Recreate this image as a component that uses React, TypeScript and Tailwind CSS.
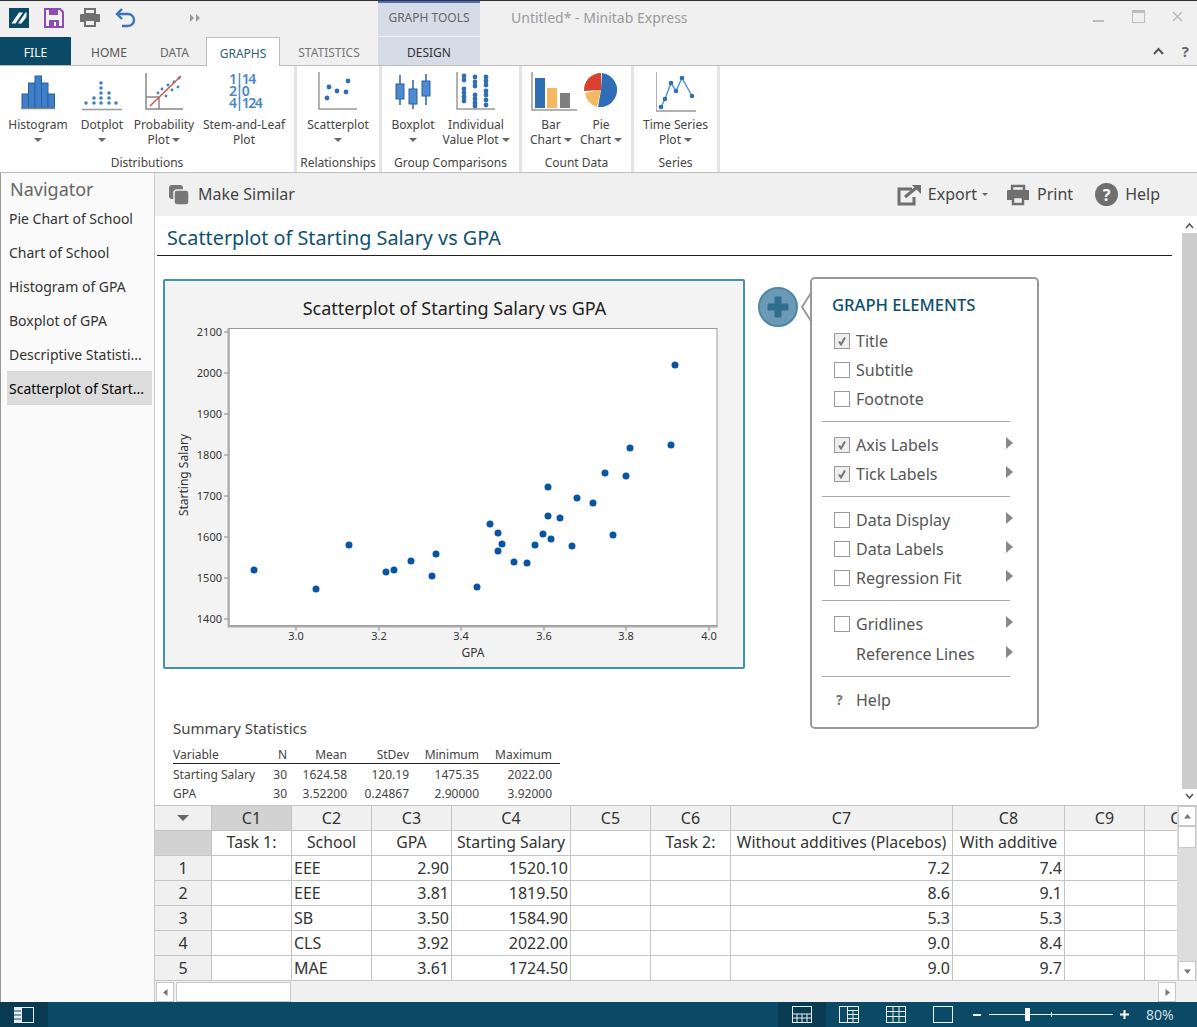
import React from "react";

const points = [
  [254, 570], [316, 589], [349, 545], [386, 572], [394, 570], [411, 561], [432, 576], [436, 554],
  [477, 587], [490, 524], [498, 533], [498, 551], [502, 544], [514, 562], [527, 563], [535, 545],
  [543, 534], [548, 516], [551, 539], [548, 487], [560, 518], [572, 546], [577, 498], [593, 503],
  [605, 473], [613, 535], [626, 476], [630, 448], [671, 445], [675, 365],
];

const Caret = () => (
  <span className="inline-block w-0 h-0 border-x-[4px] border-x-transparent border-t-[4px] border-t-[#666]" />
);

function HistogramIcon() {
  const bars = [[4, 22], [10.5, 11], [17, 4], [23.5, 11], [30, 22]];
  return (
    <svg width="40" height="40" viewBox="0 0 40 40">
      {bars.map(([x, y]) => (
        <rect key={x} x={x} y={y} width="6.5" height={36 - y} fill="#3f7fc9" stroke="#2b5f9e" strokeWidth="1" />
      ))}
      <path d="M3 36.5h34" stroke="#888" strokeWidth="1.5" />
    </svg>
  );
}

function DotplotIcon() {
  const cols = [[4, 1], [12, 2], [19, 5], [27, 3], [34, 1]];
  return (
    <svg width="40" height="40" viewBox="0 0 40 40">
      {cols.flatMap(([x, n]) =>
        Array.from({ length: n }, (_, i) => <circle key={`${x}-${i}`} cx={x} cy={31 - i * 5} r="1.8" fill="#3f7fc9" />)
      )}
      <path d="M0 37.5h40" stroke="#999" strokeWidth="1.5" />
    </svg>
  );
}

function ProbabilityIcon() {
  const dots = [[14, 21], [18, 17], [22, 24], [24, 13], [28, 18], [30, 10], [34, 15], [35, 6]];
  return (
    <svg width="40" height="40" viewBox="0 0 40 40">
      <path d="M2 1v36h37M2 25h13v12" fill="none" stroke="#888" strokeWidth="1.5" />
      {dots.map(([x, y]) => <circle key={x} cx={x} cy={y} r="1.4" fill="#3f7fc9" />)}
      <path d="M6 34 37 4" stroke="#d9534f" strokeWidth="1.5" />
    </svg>
  );
}

function ScatterIcon() {
  const dots = [[9, 26], [11, 15], [19, 19], [28, 20], [30, 9]];
  return (
    <svg width="40" height="40" viewBox="0 0 40 40">
      <path d="M1 0v37h38" fill="none" stroke="#999" strokeWidth="1.5" />
      {dots.map(([x, y]) => <circle key={x} cx={x} cy={y} r="2.4" fill="#2f6db5" />)}
    </svg>
  );
}

function BoxplotIcon() {
  const boxes = [[2, 3, 33, 12, 27], [15, 8, 37, 17, 32], [28, 2, 33, 9, 24]];
  return (
    <svg width="38" height="40" viewBox="0 0 38 40">
      {boxes.map(([x, w1, w2, b1, b2]) => (
        <g key={x}>
          <path d={`M${x + 4} ${w1}V${w2}`} stroke="#2b5f9e" strokeWidth="1.5" />
          <rect x={x} y={b1} width="8" height={b2 - b1} fill="#4d8ad0" stroke="#2b5f9e" />
        </g>
      ))}
    </svg>
  );
}

function IndividualIcon() {
  const dots = [
    [8, 4], [8, 8], [8, 17], [8, 21], [8, 25], [8, 29],
    [19, 5], [19, 10], [19, 14], [19, 23], [19, 27], [19, 31], [19, 34],
    [30, 5], [30, 9], [30, 13], [30, 19], [30, 23], [30, 28], [30, 33],
  ];
  return (
    <svg width="40" height="40" viewBox="0 0 40 40">
      <path d="M1 0v37h38" fill="none" stroke="#999" strokeWidth="1.5" />
      {dots.map(([x, y]) => <circle key={`${x}-${y}`} cx={x} cy={y} r="2.4" fill="#2f6db5" />)}
    </svg>
  );
}

function BarIcon() {
  return (
    <svg width="46" height="40" viewBox="0 0 46 40" className="ml-[6px] shrink-0">
      <path d="M1 0v38h45" fill="none" stroke="#999" strokeWidth="1.5" />
      <rect x="4" y="6" width="10" height="30" fill="#2f6db5" />
      <rect x="16" y="16" width="10" height="20" fill="#f4b860" />
      <rect x="29" y="21" width="10" height="15" fill="#7f7f7f" />
    </svg>
  );
}

function PieIcon() {
  return (
    <svg width="36" height="36" viewBox="0 0 36 36" className="shrink-0">
      <path d="M19 1A17 17 0 1 1 15 35L18 18Z" fill="#2f6db5" />
      <path d="M14 35A17 17 0 0 1 2 21L18 18Z" fill="#f4b860" />
      <path d="M1 19A17 17 0 0 1 18 1V18Z" fill="#d9412f" />
    </svg>
  );
}

function TimeIcon() {
  const pts = [[5, 35], [9, 27], [15, 11], [20, 19], [26, 6], [36, 24]];
  return (
    <svg width="40" height="40" viewBox="0 0 40 40">
      <path d="M0 0v39h40" fill="none" stroke="#999" strokeWidth="1.5" />
      <polyline points={pts.map((p) => p.join(",")).join(" ")} fill="none" stroke="#5b93cf" strokeWidth="1.5" />
      {pts.map(([x, y]) => <circle key={x} cx={x} cy={y} r="2.3" fill="#2f6db5" />)}
    </svg>
  );
}

function StemIcon() {
  return (
    <div className="w-[40px] h-[40px] pl-[5px] pt-[1px] text-[14px] leading-[12px] tracking-[-1.5px] font-semibold text-[#4a86c8] whitespace-pre">
      <div>1|14</div>
      <div>2|0</div>
      <div>4|124</div>
    </div>
  );
}

function RibbonButton({ width, lines, caret, icon }: { width: string; lines: string[]; caret?: boolean; icon: React.ReactNode }) {
  return (
    <div className={`flex flex-col items-center ${width}`}>
      <div className="h-[51px] pt-[6px] flex items-start justify-center">{icon}</div>
      {lines.map((line, i) => (
        <div key={line} className="h-[15px] leading-[15px] whitespace-nowrap flex items-center gap-[3px]">
          {line}
          {caret && i === 1 && <Caret />}
        </div>
      ))}
      {caret && lines.length === 1 && (
        <div className="h-[15px] flex items-center"><Caret /></div>
      )}
    </div>
  );
}

function RibbonGroup({ label, width, children }: { label: string; width: string; children: React.ReactNode }) {
  return (
    <div className={`${width} h-full flex flex-col border-r-[3px] border-r-[#e4e4e4]`}>
      <div className="flex justify-center flex-1">{children}</div>
      <div className="h-[19px] text-center leading-[19px] text-[12px] whitespace-nowrap">{label}</div>
    </div>
  );
}

function Ribbon() {
  return (
    <div className="h-[107px] bg-white border-b border-[#bdbdbd] flex text-[12px] text-[#444]">
      <RibbonGroup label="Distributions" width="w-[297px]">
        <RibbonButton width="w-[70px]" lines={["Histogram"]} caret icon={<HistogramIcon />} />
        <RibbonButton width="w-[58px]" lines={["Dotplot"]} caret icon={<DotplotIcon />} />
        <RibbonButton width="w-[66px]" lines={["Probability", "Plot"]} caret icon={<ProbabilityIcon />} />
        <RibbonButton width="w-[94px]" lines={["Stem-and-Leaf", "Plot"]} icon={<StemIcon />} />
      </RibbonGroup>
      <RibbonGroup label="Relationships" width="w-[85px]">
        <RibbonButton width="w-[80px]" lines={["Scatterplot"]} caret icon={<ScatterIcon />} />
      </RibbonGroup>
      <RibbonGroup label="Group Comparisons" width="w-[140px]">
        <RibbonButton width="w-[51px]" lines={["Boxplot"]} caret icon={<BoxplotIcon />} />
        <RibbonButton width="w-[75px]" lines={["Individual", "Value Plot"]} caret icon={<IndividualIcon />} />
      </RibbonGroup>
      <RibbonGroup label="Count Data" width="w-[112px]">
        <RibbonButton width="w-[49px]" lines={["Bar", "Chart"]} caret icon={<BarIcon />} />
        <RibbonButton width="w-[51px]" lines={["Pie", "Chart"]} caret icon={<PieIcon />} />
      </RibbonGroup>
      <RibbonGroup label="Series" width="w-[86px]">
        <RibbonButton width="w-[80px]" lines={["Time Series", "Plot"]} caret icon={<TimeIcon />} />
      </RibbonGroup>
    </div>
  );
}

function TitleBar() {
  return (
    <div className="h-[36px] flex">
      <div className="w-[378px] flex items-center pl-[9px]">
        <svg width="20" height="20" viewBox="0 0 20 20" className="mt-[-2px]">
          <rect width="20" height="20" fill="#0b4a66" />
          <path d="M2.5 15.5 10 4.5h4L6.5 15.5zM9 15.5 16.5 4.5h1v4.5L12.5 15.5z" fill="#fff" />
        </svg>
        <svg width="20" height="20" viewBox="0 0 20 20" className="ml-[15px] mt-[-2px]">
          <path d="M1 1h15l3 3v15H1z" fill="none" stroke="#8e4bb5" strokeWidth="2" />
          <path d="M5 1h9v6H5zM5 12h10v7H5z" fill="#8e4bb5" />
          <rect x="10" y="14" width="2" height="4" fill="#fff" />
        </svg>
        <svg width="22" height="20" viewBox="0 0 22 20" className="ml-[15px] mt-[-2px]">
          <path d="M6 1h10v5H6z" fill="none" stroke="#707070" strokeWidth="2" />
          <path d="M2 6h18a1 1 0 0 1 1 1v7h-4v-3H5v3H1V7a1 1 0 0 1 1-1z" fill="#707070" />
          <path d="M6 12h10v6H6z" fill="none" stroke="#707070" strokeWidth="2" />
        </svg>
        <svg width="22" height="20" viewBox="0 0 22 20" className="ml-[14px] mt-[-2px]">
          <path d="M7 1 2 6l5 5" fill="none" stroke="#3a73b8" strokeWidth="2.4" />
          <path d="M3 6h10a6 6 0 0 1 0 12H7" fill="none" stroke="#3a73b8" strokeWidth="2.4" />
        </svg>
        <svg width="11" height="8" viewBox="0 0 11 8" className="ml-[53px] mt-[-2px]">
          <path d="M0 0l4 4-4 4zM6 0l4 4-4 4z" fill="#999" />
        </svg>
      </div>
      <div className="w-[102px] bg-[#d6dbe8] border-t-[2px] border-t-[#4c6fb8] border-b border-b-[#eef0f5] flex items-center justify-center pb-[3px] text-[12px] text-[#666]">
        GRAPH TOOLS
      </div>
      <div className="ml-[31px] flex-1 flex items-center text-[14px] text-[#9a9a9a] mt-[-4px]">Untitled* - Minitab Express</div>
      <div className="flex items-start pt-[9px] pr-[10px]">
        <div className="w-[11px] h-[2px] bg-[#bdbdbd] mt-[10px] mr-[28px]" />
        <div className="w-[13px] h-[13px] border border-[#bdbdbd] border-t-[3px] mr-[27px]" />
        <svg width="11" height="11" viewBox="0 0 11 11" className="mt-[1px] mr-[4px]">
          <path d="M1 1l9 9M10 1l-9 9" stroke="#bdbdbd" strokeWidth="1.6" />
        </svg>
      </div>
    </div>
  );
}

function TabRow() {
  return (
    <div className="h-[29px] flex text-[12px] border-b border-[#bdbdbd] text-[#555]">
      <div className="w-[71px] bg-[#0b4a66] text-white flex items-center justify-center pt-[3px]">FILE</div>
      <div className="w-[76px] flex items-center justify-center pt-[3px]">HOME</div>
      <div className="w-[55px] flex items-center justify-center pt-[3px] text-[#666]">DATA</div>
      <div className="ml-[4px] w-[74px] h-[29px] bg-white border border-b-0 border-[#bdbdbd] flex items-center justify-center pt-[3px] text-[#2f5f7a]">GRAPHS</div>
      <div className="w-[98px] flex items-center justify-center pt-[3px] text-[#777]">STATISTICS</div>
      <div className="w-[102px] bg-[#d6dbe8] flex items-center justify-center pt-[3px] text-[#333]">DESIGN</div>
      <div className="flex-1 flex items-center justify-end gap-[18px] pr-[8px]">
        <svg width="11" height="8" viewBox="0 0 11 8"><path d="M1 7l4.5-5L10 7" fill="none" stroke="#555" strokeWidth="2" /></svg>
        <span className="text-[15px] font-bold text-[#666]">?</span>
      </div>
    </div>
  );
}

function Navigator() {
  const items = ["Pie Chart of School", "Chart of School", "Histogram of GPA", "Boxplot of GPA", "Descriptive Statisti...", "Scatterplot of Start..."];
  return (
    <div className="w-[155px] shrink-0 bg-[#fafafa] border-r border-[#c8c8c8] border-l border-l-[#999]">
      <div className="h-[28px] pl-[9px] pt-[4px] text-[18px] leading-[24px] text-[#666]">Navigator</div>
      {items.map((item, i) => (
        <div
          key={item}
          className={`ml-[6px] w-[145px] h-[34px] pl-[2px] flex items-center text-[14px] whitespace-nowrap text-[#333] ${i === 5 ? "bg-[#dcdcdc] text-black" : ""}`}
        >
          {item}
        </div>
      ))}
    </div>
  );
}

function ToolbarBar() {
  return (
    <div className="h-[43px] flex items-center justify-between bg-[#f0f0f0] text-[16px] leading-[22px] text-[#444]">
      <div className="flex items-center pl-[13px] gap-[8px]">
        <svg width="22" height="22" viewBox="0 0 22 22">
          <rect x="1" y="1" width="14" height="14" rx="3" fill="#777" />
          <rect x="6" y="6" width="15" height="15" rx="3" fill="#777" stroke="#f0f0f0" strokeWidth="1.5" />
        </svg>
        <span className="mt-[-2px]">Make Similar</span>
      </div>
      <div className="flex items-center pr-[37px]">
        <svg width="24" height="22" viewBox="0 0 24 22">
          <path d="M15 5H2v15h15v-7" fill="none" stroke="#6f6f6f" strokeWidth="3" />
          <path d="M8 13 19 4" stroke="#6f6f6f" strokeWidth="3" />
          <path d="M15 1h9v9z" fill="#6f6f6f" />
        </svg>
        <span className="ml-[7px] mt-[-2px]">Export</span>
        <span className="ml-[5px] inline-block w-0 h-0 border-x-[3px] border-x-transparent border-t-[3px] border-t-[#666]" />
        <svg width="24" height="22" viewBox="0 0 24 22" className="ml-[18px]">
          <path d="M6 2h12v5H6z" fill="none" stroke="#6f6f6f" strokeWidth="2.5" />
          <path d="M2 6h20a1 1 0 0 1 1 1v9h-5v-4H6v4H1V7a1 1 0 0 1 1-1z" fill="#6f6f6f" />
          <path d="M7 13h10v7h-10z" fill="none" stroke="#6f6f6f" strokeWidth="2.5" />
        </svg>
        <span className="ml-[7px] mt-[-2px]">Print</span>
        <div className="ml-[22px] w-[23px] h-[23px] rounded-full bg-[#6f6f6f] text-white text-[16px] font-bold flex items-center justify-center">?</div>
        <span className="ml-[7px] mt-[-2px]">Help</span>
      </div>
    </div>
  );
}

function ScatterChart() {
  const yTicks = [[2100, 332], [2000, 373], [1900, 414], [1800, 455], [1700, 496], [1600, 537], [1500, 578], [1400, 619]];
  const xTicks = [["3.0", 296], ["3.2", 379], ["3.4", 461], ["3.6", 544], ["3.8", 626], ["4.0", 709]];
  return (
    <svg width="578" height="385" viewBox="165 281 578 385" className="block">
      <text x="454.5" y="315" textAnchor="middle" fontSize="18" fill="#222">Scatterplot of Starting Salary vs GPA</text>
      <rect x="229" y="328.5" width="488" height="297" fill="#fff" stroke="#999" />
      <path d="M228.5 328v299M228 626.5h490" stroke="#aaa" strokeWidth="2" />
      {yTicks.map(([label, y]) => (
        <g key={label}>
          <path d={`M224 ${y}h4`} stroke="#888" />
          <text x="222" y={Number(y) + 4} textAnchor="end" fontSize="11" fill="#333">{label}</text>
        </g>
      ))}
      {xTicks.map(([label, x]) => (
        <g key={label}>
          <path d={`M${x} 627v4`} stroke="#888" />
          <text x={x} y="640" textAnchor="middle" fontSize="11" fill="#333">{label}</text>
        </g>
      ))}
      <text x="473" y="657" textAnchor="middle" fontSize="12" fill="#333">GPA</text>
      <text transform="translate(188 475) rotate(-90)" textAnchor="middle" fontSize="12" fill="#333">Starting Salary</text>
      {points.map(([x, y]) => <circle key={`${x}-${y}`} cx={x} cy={y} r="3.5" fill="#0a55a3" />)}
    </svg>
  );
}

function Check({ checked }: { checked?: boolean }) {
  return (
    <div className={`w-[16px] h-[16px] border border-[#9a9a9a] flex items-center justify-center shrink-0 ${checked ? "bg-[#eeeeee]" : "bg-white"}`}>
      {checked && (
        <svg width="10" height="10" viewBox="0 0 10 10"><path d="M2 5.5 4 8.5 8 1.5" fill="none" stroke="#777" strokeWidth="2" /></svg>
      )}
    </div>
  );
}

function PanelRow({ label, checked, box = true, arrow }: { label: string; checked?: boolean; box?: boolean; arrow?: boolean }) {
  return (
    <div className="h-[29px] flex items-center text-[16px] text-[#555] pl-[22px]">
      {box ? <Check checked={checked} /> : <div className="w-[16px]" />}
      <span className="ml-[6px] flex-1">{label}</span>
      {arrow && <span className="mr-[24px] mt-[-4px] w-0 h-0 border-y-[6px] border-y-transparent border-l-[7px] border-l-[#888]" />}
    </div>
  );
}

const PanelSep = () => <div className="mx-[10px] w-[188px] h-px bg-[#a8a8a8] my-[8px]" />;

function GraphElements() {
  return (
    <div className="absolute left-[603px] top-[61px]">
      <div className="absolute left-[0px] top-[10px] w-[40px] h-[40px] rounded-full bg-[#6a9ab5] border-2 border-[#4f86a3] flex items-center justify-center">
        <svg width="22" height="22" viewBox="0 0 22 22"><path d="M8 1h6v7h7v6h-7v7H8v-7H1V8h7z" fill="#2f6e8f" stroke="#2f6e8f" strokeLinejoin="round" /></svg>
      </div>
      <div className="absolute left-[43px] top-[16px] w-[11px] h-[28px]">
        <svg width="11" height="28" viewBox="0 0 11 28"><path d="M10 0 1 14l9 14" fill="#fff" stroke="#999" strokeWidth="2" /></svg>
      </div>
      <div className="absolute left-[52px] top-0 w-[229px] h-[452px] bg-white border-2 border-[#999] rounded-[5px] pt-[15px]">
        <div className="pl-[20px] h-[32px] text-[16.6px] leading-[22px] font-medium text-[#0d4f6c]">GRAPH ELEMENTS</div>
        <PanelRow label="Title" checked />
        <PanelRow label="Subtitle" />
        <PanelRow label="Footnote" />
        <PanelSep />
        <PanelRow label="Axis Labels" checked arrow />
        <PanelRow label="Tick Labels" checked arrow />
        <PanelSep />
        <PanelRow label="Data Display" arrow />
        <PanelRow label="Data Labels" arrow />
        <PanelRow label="Regression Fit" arrow />
        <PanelSep />
        <PanelRow label="Gridlines" arrow />
        <div className="h-[1px]" />
        <PanelRow label="Reference Lines" box={false} arrow />
        <PanelSep />
        <div className="h-[29px] mt-[3px] flex items-center text-[16px] text-[#555] pl-[24px]">
          <span className="w-[14px] font-bold text-[14px] text-[#777]">?</span>
          <span className="ml-[6px]">Help</span>
        </div>
      </div>
    </div>
  );
}

function SummaryStats() {
  const head = ["Variable", "N", "Mean", "StDev", "Minimum", "Maximum"];
  const rows = [
    ["Starting Salary", "30", "1624.58", "120.19", "1475.35", "2022.00"],
    ["GPA", "30", "3.52200", "0.24867", "2.90000", "3.92000"],
  ];
  const cols = "grid grid-cols-[93px_21px_60px_62px_70px_73px_8px]";
  return (
    <div className="ml-[18px] mt-[49px] w-[387px] text-[12px] text-[#444]">
      <div className="text-[15px] leading-[20px] text-[#444] mb-[7px]">Summary Statistics</div>
      <div className={`${cols} h-[19px] border-b border-[#222] leading-[20px]`}>
        {head.map((h, i) => <div key={h} className={`${i ? "text-right" : ""} whitespace-nowrap`}>{h}</div>)}
        <div />
      </div>
      {rows.map((r) => (
        <div key={r[0]} className={`${cols} h-[19px] leading-[21px]`}>
          {r.map((c, i) => <div key={i} className={`${i ? "text-right" : ""} whitespace-nowrap`}>{c}</div>)}
          <div />
        </div>
      ))}
    </div>
  );
}

function OutputPane() {
  return (
    <div className="h-[589px] flex bg-white">
      <div className="flex-1 relative overflow-hidden">
        <div className="ml-[2px] mr-[10px] h-[40px] border-b border-[#222] pl-[10px] text-[19.8px] leading-[43px] text-[#0d5170]">
          Scatterplot of Starting Salary vs GPA
        </div>
        <div className="ml-[8px] mt-[23px] w-[582px] h-[390px] border-2 border-[#3f93ad] rounded-[2px] bg-[#f3f3f3]">
          <ScatterChart />
        </div>
        <SummaryStats />
        <GraphElements />
      </div>
      <div className="w-[15px] flex flex-col items-center bg-white">
        <svg width="9" height="17" viewBox="0 0 9 17" className="shrink-0"><path d="M1 12l3.5-4L8 12" fill="none" stroke="#555" strokeWidth="1.5" /></svg>
        <div className="w-full h-[556px] bg-[#cdcdcd]" />
        <svg width="9" height="12" viewBox="0 0 9 12" className="mt-[2px] shrink-0"><path d="M1 3l3.5 4L8 3" fill="none" stroke="#555" strokeWidth="1.5" /></svg>
      </div>
    </div>
  );
}

const colHeaders = ["C1", "C2", "C3", "C4", "C5", "C6", "C7", "C8", "C9", "C10"];
const colNames = ["Task 1:", "School", "GPA", "Starting Salary", "", "Task 2:", "Without additives (Placebos)", "With additive", "", ""];
const sheetRows = [
  ["EEE", "2.90", "1520.10", "7.2", "7.4"],
  ["EEE", "3.81", "1819.50", "8.6", "9.1"],
  ["SB", "3.50", "1584.90", "5.3", "5.3"],
  ["CLS", "3.92", "2022.00", "9.0", "8.4"],
  ["MAE", "3.61", "1724.50", "9.0", "9.7"],
];

function Sheet() {
  const cell = "h-[25px] pb-[1px] border-r border-b border-[#c4c4c4] flex items-center text-[16px] text-[#333] whitespace-nowrap overflow-hidden";
  return (
    <div className="flex-1 overflow-hidden">
      <div className="w-[1070px] grid grid-cols-[57px_80px_80px_80px_119px_80px_80px_222px_112px_80px_80px]">
        <div className={`${cell} bg-[#f0f0f0] justify-center`}>
          <span className="w-0 h-0 border-x-[6px] border-x-transparent border-t-[6px] border-t-[#666]" />
        </div>
        {colHeaders.map((c, i) => (
          <div key={c} className={`${cell} justify-center ${i === 0 ? "bg-[#d2d2d2]" : "bg-[#f0f0f0]"}`}>{c}</div>
        ))}
        <div className={`${cell} bg-[#d2d2d2]`} />
        {colNames.map((c, i) => <div key={i} className={`${cell} bg-white justify-center !text-[15.8px]`}>{c}</div>)}
        {sheetRows.map(([school, gpa, salary, a, b], r) => (
          <React.Fragment key={r}>
            <div className={`${cell} bg-[#f0f0f0] justify-center`}>{r + 1}</div>
            <div className={`${cell} bg-white`} />
            <div className={`${cell} bg-white pl-[2px]`}>{school}</div>
            <div className={`${cell} bg-white justify-end pr-[2px]`}>{gpa}</div>
            <div className={`${cell} bg-white justify-end pr-[2px]`}>{salary}</div>
            <div className={`${cell} bg-white`} />
            <div className={`${cell} bg-white`} />
            <div className={`${cell} bg-white justify-end pr-[2px]`}>{a}</div>
            <div className={`${cell} bg-white justify-end pr-[2px]`}>{b}</div>
            <div className={`${cell} bg-white`} />
            <div className={`${cell} bg-white`} />
          </React.Fragment>
        ))}
      </div>
    </div>
  );
}

function ScrollButton({ d }: { d: string }) {
  return (
    <div className="w-[18px] h-[20px] bg-white border border-[#c8c8c8] flex items-center justify-center shrink-0">
      <svg width="9" height="9" viewBox="0 0 9 9"><path d={d} fill="#777" /></svg>
    </div>
  );
}

function SheetPane() {
  return (
    <div className="flex flex-col border-t border-[#c4c4c4]">
      <div className="h-[175px] flex overflow-hidden">
        <Sheet />
        <div className="w-[20px] shrink-0 bg-[#dcdcdc] flex flex-col items-center">
          <ScrollButton d="M1 6.5 4.5 2 8 6.5z" />
          <div className="w-[18px] h-[22px] bg-white border border-[#c8c8c8]" />
          <div className="flex-1" />
          <ScrollButton d="M1 2.5 4.5 7 8 2.5z" />
        </div>
      </div>
      <div className="h-[21px] bg-[#f0f0f0] flex items-start pl-[1px] pt-[1px]">
        <ScrollButton d="M6.5 1 2 4.5 6.5 8z" />
        <div className="ml-[2px] w-[115px] h-[20px] bg-white border border-[#c8c8c8]" />
        <div className="flex-1" />
        <div className="mr-[21px]"><ScrollButton d="M2.5 1 7 4.5 2.5 8z" /></div>
      </div>
    </div>
  );
}

function StatusBar() {
  return (
    <div className="h-[25px] bg-[#0b4a66] flex items-stretch text-[#dfe9ee]">
      <div className="w-[48px] bg-[#083b52] flex items-center justify-center">
        <svg width="20" height="16" viewBox="0 0 20 16">
          <rect x="0.5" y="0.5" width="19" height="15" fill="none" stroke="#e8eef1" />
          <path d="M0 0h8v16H0z" fill="#e8eef1" />
          <path d="M0 4h7M0 8h7M0 12h7" stroke="#0b4a66" />
        </svg>
      </div>
      <div className="flex-1" />
      <div className="w-[48px] bg-[#083b52] flex items-center justify-center">
        <svg width="20" height="17" viewBox="0 0 20 17">
          <rect x="0.5" y="0.5" width="19" height="16" fill="none" stroke="#e8eef1" />
          <path d="M0 8h20M0 12h20M5 8v9M10 8v9M15 8v9" stroke="#e8eef1" />
        </svg>
      </div>
      <div className="flex items-center pl-[13px] pr-[20px] gap-[27px]">
        <svg width="20" height="17" viewBox="0 0 20 17">
          <rect x="0.5" y="0.5" width="19" height="16" fill="none" stroke="#e8eef1" />
          <path d="M8.5 0v17M8 4.5h12M8 8.5h12M8 12.5h12M14 4v13" stroke="#e8eef1" />
        </svg>
        <svg width="20" height="17" viewBox="0 0 20 17">
          <rect x="0.5" y="0.5" width="19" height="16" fill="none" stroke="#e8eef1" />
          <path d="M0 5.5h20M0 10.5h20M7 0v17M13 0v17" stroke="#e8eef1" />
        </svg>
        <div className="w-[20px] h-[17px] border border-[#e8eef1]" />
      </div>
      <div className="flex items-center w-[173px]">
        <div className="w-[8px] h-[2px] bg-white" />
        <div className="ml-[8px] relative w-[124px] h-px bg-[#e8eef1]">
          <div className="absolute left-[36px] top-[-6px] w-[5px] h-[13px] bg-white" />
          <div className="absolute left-[62px] top-[-2px] w-px h-[5px] bg-[#e8eef1]" />
        </div>
        <svg width="9" height="9" viewBox="0 0 9 9" className="ml-[7px]"><path d="M4.5 0v9M0 4.5h9" stroke="#fff" strokeWidth="2" /></svg>
      </div>
      <div className="w-[51px] flex items-center text-[14px] text-[#cfdde4]">80%</div>
    </div>
  );
}

export default function App() {
  return (
    <div className="w-[1197px] h-[1027px] flex flex-col overflow-hidden bg-[#f0f0f0] font-['Noto_Sans','Open_Sans',sans-serif]">
      <div className="h-px bg-[#333] shrink-0" />
      <TitleBar />
      <TabRow />
      <Ribbon />
      <div className="flex flex-1 min-h-0">
        <Navigator />
        <div className="flex-1 min-w-0 flex flex-col">
          <ToolbarBar />
          <OutputPane />
          <SheetPane />
        </div>
      </div>
      <StatusBar />
    </div>
  );
}
